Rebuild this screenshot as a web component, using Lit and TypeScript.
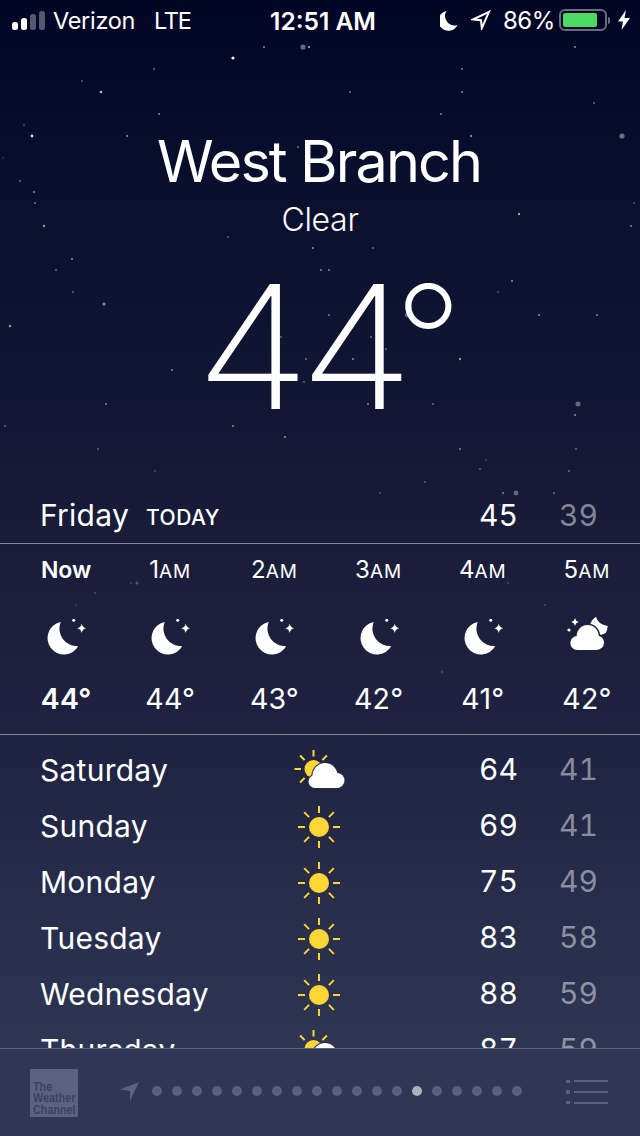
import { LitElement, html, css, svg } from "lit";
import { customElement } from "lit/decorators.js";

const STARS: [number, number, number, number][] = [
  [233,58,1.6,.95],[303,47,2.6,.4],[264,47,1.1,.5],[309,47,1.1,.7],[575,47,1.1,.5],[154,69,1,.4],[462,69,1.1,.45],[82,81,1,.35],[101,92,1.3,.7],[350,92,1,.4],[462,92,1.1,.5],[594,103,1,.4],[159,114,1.1,.5],[441,114,1,.5],[24,125,.9,.3],[32,136,1.4,.85],[127,136,1.1,.55],[471,136,1.2,.5],[622,136,2.6,.4],[298,147,1,.4],[3,158,.8,.25],[20,181,1,.35],[34,192,1.1,.5],[35,203,1,.4],[634,203,.9,.3],[519,214,1.2,.6],[44,226,1.2,.55],[631,226,1.1,.45],[228,237,1,.3],[313,248,1.1,.5],[373,248,1,.4],[72,259,1.1,.5],[56,270,1,.4],[321,270,1,.5],[329,270,1,.5],
  [73,292,1,.35],[104,304,1.6,.5],[10,326,1.2,.6],[329,315,1,.45],[512,281,1.1,.5],[498,292,.9,.3],[539,315,1.1,.5],[597,315,1,.45],[407,315,2.4,.3],[281,337,1,.35],[371,337,1,.4],[386,349,1,.4],[306,359,1,.4],[353,359,1.1,.5],[460,359,1.2,.55],[172,370,1.1,.45],[304,382,1,.35],[106,404,1.1,.45],[368,404,1.1,.45],[433,404,1,.4],[578,404,2.5,.35],[575,415,1.1,.5],[5,426,.9,.35],[233,426,1,.5],[285,437,1.2,.4],[98,449,1,.35],[460,449,1.1,.45],[576,449,1,.35],[486,460,.9,.25],[480,469,1,.35],[155,471,.9,.25],[569,471,1,.4],[425,482,1,.3],[380,493,.9,.25],[503,493,1.1,.45],[516,493,2.4,.35],[554,493,1,.4],
  [131,583,1,.2],[137,583,1.6,.25],[95,593,1,.2],[76,605,1,.15],[508,583,1,.2],[545,605,1,.18],[442,672,1.4,.15],[500,505,1,.15],
];

const moon = svg`<path fill="#fff" d="M16.7 9A16.4 16.4 0 1 0 34.3 33 17.5 17.5 0 0 1 16.7 9Z"/>`;
const sparkle = (x: number, y: number, r: number) =>
  svg`<path fill="#fff" d="M${x} ${y - r}Q${x + r * 0.18} ${y - r * 0.18} ${x + r} ${y}Q${x + r * 0.18} ${y + r * 0.18} ${x} ${y + r}Q${x - r * 0.18} ${y + r * 0.18} ${x - r} ${y}Q${x - r * 0.18} ${y - r * 0.18} ${x} ${y - r}Z"/>`;

const moonIcon = html`<svg class="hicon" viewBox="0 0 44 44">${moon}<circle cx="29.7" cy="7.3" r="1.5" fill="#fff"/>${sparkle(37.7, 15.3, 4.6)}</svg>`;

const lobes = (c: [number, number, number][], x1: number, x2: number, y1: number, y2: number, extra: string) =>
  svg`${c.map(([x, y, r]) => svg`<circle cx=${x} cy=${y} r=${r} style=${extra}/>`)}<rect x=${x1} y=${y1} width=${x2 - x1} height=${y2 - y1} style=${extra}/>`;

const hc: [number, number, number][] = [[12.3, 30, 7], [22.7, 23, 11], [31.7, 29.7, 7.3]];
const cloudMoonIcon = html`<svg class="hicon" viewBox="0 0 44 44">
  <path fill="#fff" d="M31 3.7Q32.5 11 42.7 13 42.5 17 40.7 20L36 22 25 13Q25 8 31 3.7Z"/>
  ${sparkle(10, 9, 3.8)}
  <circle cx="4" cy="17" r="1.6" fill="#fff"/>
  ${lobes(hc, 12.3, 31.7, 26, 37, "fill:#1f2340;stroke:#1f2340;stroke-width:3")}
  ${lobes(hc, 12.3, 31.7, 26, 37, "fill:#fff")}
</svg>`;

const rays = (cx: number, cy: number, a: number, b: number) =>
  [0, 45, 90, 135, 180, 225, 270, 315].map((d) => {
    const t = (d * Math.PI) / 180;
    return svg`<line x1=${cx + a * Math.cos(t)} y1=${cy + a * Math.sin(t)} x2=${cx + b * Math.cos(t)} y2=${cy + b * Math.sin(t)} stroke="#fdd535" stroke-width="2"/>`;
  });

const sunIcon = html`<svg class="dicon" viewBox="0 0 56 48"><circle cx="28" cy="24" r="10" fill="#fdd535"/>${rays(28, 24, 14, 21)}</svg>`;
const dc: [number, number, number][] = [[24, 34.5, 6.5], [34, 28.5, 12.5], [46, 33.5, 7.5]];
const sunCloudIcon = html`<svg class="dicon" viewBox="0 0 56 48">
  <circle cx="22.5" cy="22" r="9" fill="#fdd535"/>${rays(22.5, 22, 12.5, 19)}
  ${lobes(dc, 24, 46, 32, 41, "fill:#262b48;stroke:#262b48;stroke-width:2")}
  ${lobes(dc, 24, 46, 32, 41, "fill:#fff")}
</svg>`;

const HOURS = [
  { n: "1", s: "AM", t: "44°", i: moonIcon },
  { n: "2", s: "AM", t: "43°", i: moonIcon },
  { n: "3", s: "AM", t: "42°", i: moonIcon },
  { n: "4", s: "AM", t: "41°", i: moonIcon },
  { n: "5", s: "AM", t: "42°", i: cloudMoonIcon },
];
const DAYS = [
  { d: "Saturday", i: sunCloudIcon, h: 64, l: 41 },
  { d: "Sunday", i: sunIcon, h: 69, l: 41 },
  { d: "Monday", i: sunIcon, h: 75, l: 49 },
  { d: "Tuesday", i: sunIcon, h: 83, l: 58 },
  { d: "Wednesday", i: sunIcon, h: 88, l: 59 },
  { d: "Thursday", i: sunCloudIcon, h: 87, l: 59 },
];

@customElement("app-root")
export class AppRoot extends LitElement {
  static styles = css`
    :host {
      display: flex;
      flex-direction: column;
      position: relative;
      width: 640px;
      height: 1136px;
      overflow: hidden;
      color: #fff;
      font-family: Inter, "Liberation Sans", sans-serif;
      background: linear-gradient(180deg, #020526 0%, #0a0f2e 16%, #121634 36%, #1a1e3a 50%, #1e2240 64%, #2e3654 92%, #2f3755 100%);
    }
    .stars { position: absolute; left: 0; top: 0; width: 640px; height: 1136px; }
    .status, .hero, .today, .hours, .days, .footer { position: relative; }
    .status {
      height: 40px;
      display: flex;
      align-items: center;
      padding: 0 10px 0 12px;
      font-size: 23.5px;
      font-weight: 400;
      letter-spacing: -0.3px;
      flex: none;
    }
    .signal { display: flex; align-items: flex-end; gap: 3px; height: 19px; margin-right: 8px; margin-top: 1px; }
    .signal i { width: 6px; border-radius: 2.5px; background: #fff; display: block; }
    .signal i.off { background: #55586c; }
    .carrier { width: 101px; }
    .lte { letter-spacing: -1.2px; }
    .time { position: absolute; left: 0; right: 0; top: 0; line-height: 42px; text-align: center; font-weight: 600; font-size: 24.5px; letter-spacing: 0; padding-left: 6px; }
    .rs { margin-left: auto; display: flex; align-items: center; }
    .rs .pct { margin: 0 4px 0 12px; font-size: 24px; letter-spacing: -0.4px; }
    .arrowS { margin-left: 13px; }
    .battery { border: 2px solid #6a6d7c; border-radius: 6px; padding: 2px; box-sizing: content-box; width: 40px; height: 14px; display: block; }
    .battery b { display: block; width: 34px; height: 14px; background: #4cd964; border-radius: 2px; }
    .nub { width: 2px; height: 7px; background: #6a6d7c; margin: 0 8px 0 1px; border-radius: 0 2px 2px 0; }
    .hero { flex: none; height: 433px; text-align: center; box-sizing: border-box; padding-top: 86px; }
    .city { font-size: 57.5px; font-weight: 400; line-height: 70px; letter-spacing: -1.9px; margin-left: -2px; }
    .cond { font-size: 32px; font-weight: 300; line-height: 42px; margin-top: 3px; letter-spacing: -0.3px; }
    .temp { font-size: 172px; font-weight: 170; line-height: 172px; margin-top: 12px; white-space: nowrap; padding-left: 26px; }
    .temp .num { display: inline-block; letter-spacing: -10px; transform: scaleX(1.09); transform-origin: center; }
    .temp .deg { font-size: 150px; vertical-align: 16px; }
    .today {
      flex: none;
      height: 71px;
      box-sizing: border-box;
      display: grid;
      grid-template-columns: 105px 1fr 70px 80px;
      align-items: center;
      padding: 14px 42px 0 41px;
      border-bottom: 1px solid #85889a;
    }
    .row-name { font-size: 30px; letter-spacing: 0.25px; font-weight: 400; margin-left: -1px; }
    .label { font-size: 21px; font-weight: 500; letter-spacing: .5px; padding-top: 4px; }
    .hi, .lo { font-size: 30px; text-align: right; font-weight: 400; font-variant-numeric: tabular-nums; }
    .lo { color: rgba(255, 255, 255, .47); }
    .hours {
      flex: none;
      height: 191px;
      box-sizing: border-box;
      display: grid;
      grid-template-columns: repeat(6, 104.2px);
      padding-left: 14px;
      border-bottom: 1px solid #85889a;
    }
    .hour { display: flex; flex-direction: column; align-items: center; }
    .hour .h { height: 52px; line-height: 52px; font-size: 24px; font-weight: 400; letter-spacing: 0; }
    .hour .h small { font-size: 19px; font-weight: 400; letter-spacing: 1px; }
    .hour.now .h { font-size: 23px; font-weight: 600; }
    .hicon { width: 44px; height: 44px; margin-top: 17px; display: block; }
    .hour .t { margin-top: 22px; font-size: 28.5px; line-height: 40px; font-weight: 400; letter-spacing: .2px; }
    .hour.now .t { font-weight: 600; }
    .days { flex: 1; min-height: 0; overflow: hidden; padding-top: 7px; }
    .day {
      height: 56px;
      display: grid;
      grid-template-columns: 250px 56px 1fr 80px;
      align-items: center;
      padding-left: 41px;
      padding-right: 42px;
    }
    .day .hi, .day .lo { padding-bottom: 3px; }
    .dicon { width: 56px; height: 48px; display: block; margin-top: 2px; }
    .footer {
      flex: none;
      height: 88px;
      box-sizing: border-box;
      border-top: 1px solid #5b6280;
      background: #2f3755;
      display: flex;
      align-items: center;
      padding: 0 32px 0 30px;
    }
    .logo {
      width: 48px;
      height: 48px;
      background: #5b6280;
      color: #3a4262;
      font-family: "Liberation Sans", sans-serif;
      font-size: 13.5px;
      font-weight: 700;
      line-height: 11.5px;
      padding: 12px 0 0 3px;
      box-sizing: border-box;
      flex: none;
      overflow: hidden;
    }
    .logo div { width: 60px; transform: scaleX(.8); transform-origin: left top; }
    .arrow { width: 22px; height: 22px; margin-left: 41px; margin-bottom: 2px; flex: none; }
    .dots { display: flex; gap: 10px; margin-left: 11px; margin-bottom: 4px; }
    .dots i { display: block; width: 10px; height: 10px; border-radius: 50%; background: #596080; }
    .dots i.on { background: #adb0bc; }
    .list { margin-left: auto; margin-bottom: 2px; width: 42px; height: 24px; flex: none; display: block; }
  `;

  render() {
    return html`
      <svg class="stars" viewBox="0 0 640 1136">
        ${STARS.map(([x, y, r, o]) => svg`<circle cx=${x} cy=${y} r=${r} fill="#fff" opacity=${o}/>`)}
      </svg>
      <div class="status">
        <div class="signal">
          <i style="height:8px"></i><i style="height:12px"></i><i class="off" style="height:16px"></i><i class="off" style="height:19px"></i>
        </div>
        <span class="carrier">Verizon</span><span class="lte">LTE</span>
        <div class="time">12:51 AM</div>
        <div class="rs">
          <svg width="18" height="21" viewBox="0 0 18 21"><path fill="#fff" d="M6.5 1A10 10 0 1 0 17.5 15 9.5 9.5 0 0 1 6.5 1Z"/></svg>
          <svg class="arrowS" width="20" height="20" viewBox="0 0 20 20"><path fill="none" stroke="#fff" stroke-width="2" stroke-linejoin="miter" d="M18 1.8 2 9.5 10 10.2 10.8 18.2Z"/></svg>
          <span class="pct">86%</span>
          <div class="battery"><b></b></div><div class="nub"></div>
          <svg width="12" height="20" viewBox="0 0 12 20"><path fill="#fff" d="M8 0 0 11.5H5L3.5 20 12 8H6.5Z"/></svg>
        </div>
      </div>
      <div class="hero">
        <div class="city">West Branch</div>
        <div class="cond">Clear</div>
        <div class="temp"><span class="num">44</span><span class="deg">°</span></div>
      </div>
      <div class="today">
        <span class="row-name">Friday</span><span class="label">TODAY</span>
        <span class="hi">45</span><span class="lo">39</span>
      </div>
      <div class="hours">
        <div class="hour now"><div class="h">Now</div>${moonIcon}<div class="t">44°</div></div>
        ${HOURS.map((h) => html`<div class="hour"><div class="h">${h.n}<small>${h.s}</small></div>${h.i}<div class="t">${h.t}</div></div>`)}
      </div>
      <div class="days">
        ${DAYS.map((d) => html`<div class="day"><span class="row-name">${d.d}</span>${d.i}<span class="hi">${d.h}</span><span class="lo">${d.l}</span></div>`)}
      </div>
      <div class="footer">
        <div class="logo"><div>The<br />Weather<br />Channel</div></div>
        <svg class="arrow" viewBox="0 0 22 22"><path fill="#5b6280" d="M20 1 1 8.5 11 10 11 20Z"/></svg>
        <div class="dots">${Array.from({ length: 19 }, (_, i) => html`<i class=${i === 13 ? "on" : ""}></i>`)}</div>
        <svg class="list" viewBox="0 0 42 24">
          ${[1, 12, 23].map((y) => svg`<rect x="0" y=${y - 2} width="4" height="4" fill="#5b6280"/><rect x="8" y=${y - 1} width="34" height="2" fill="#5b6280"/>`)}
        </svg>
      </div>
    `;
  }
}
